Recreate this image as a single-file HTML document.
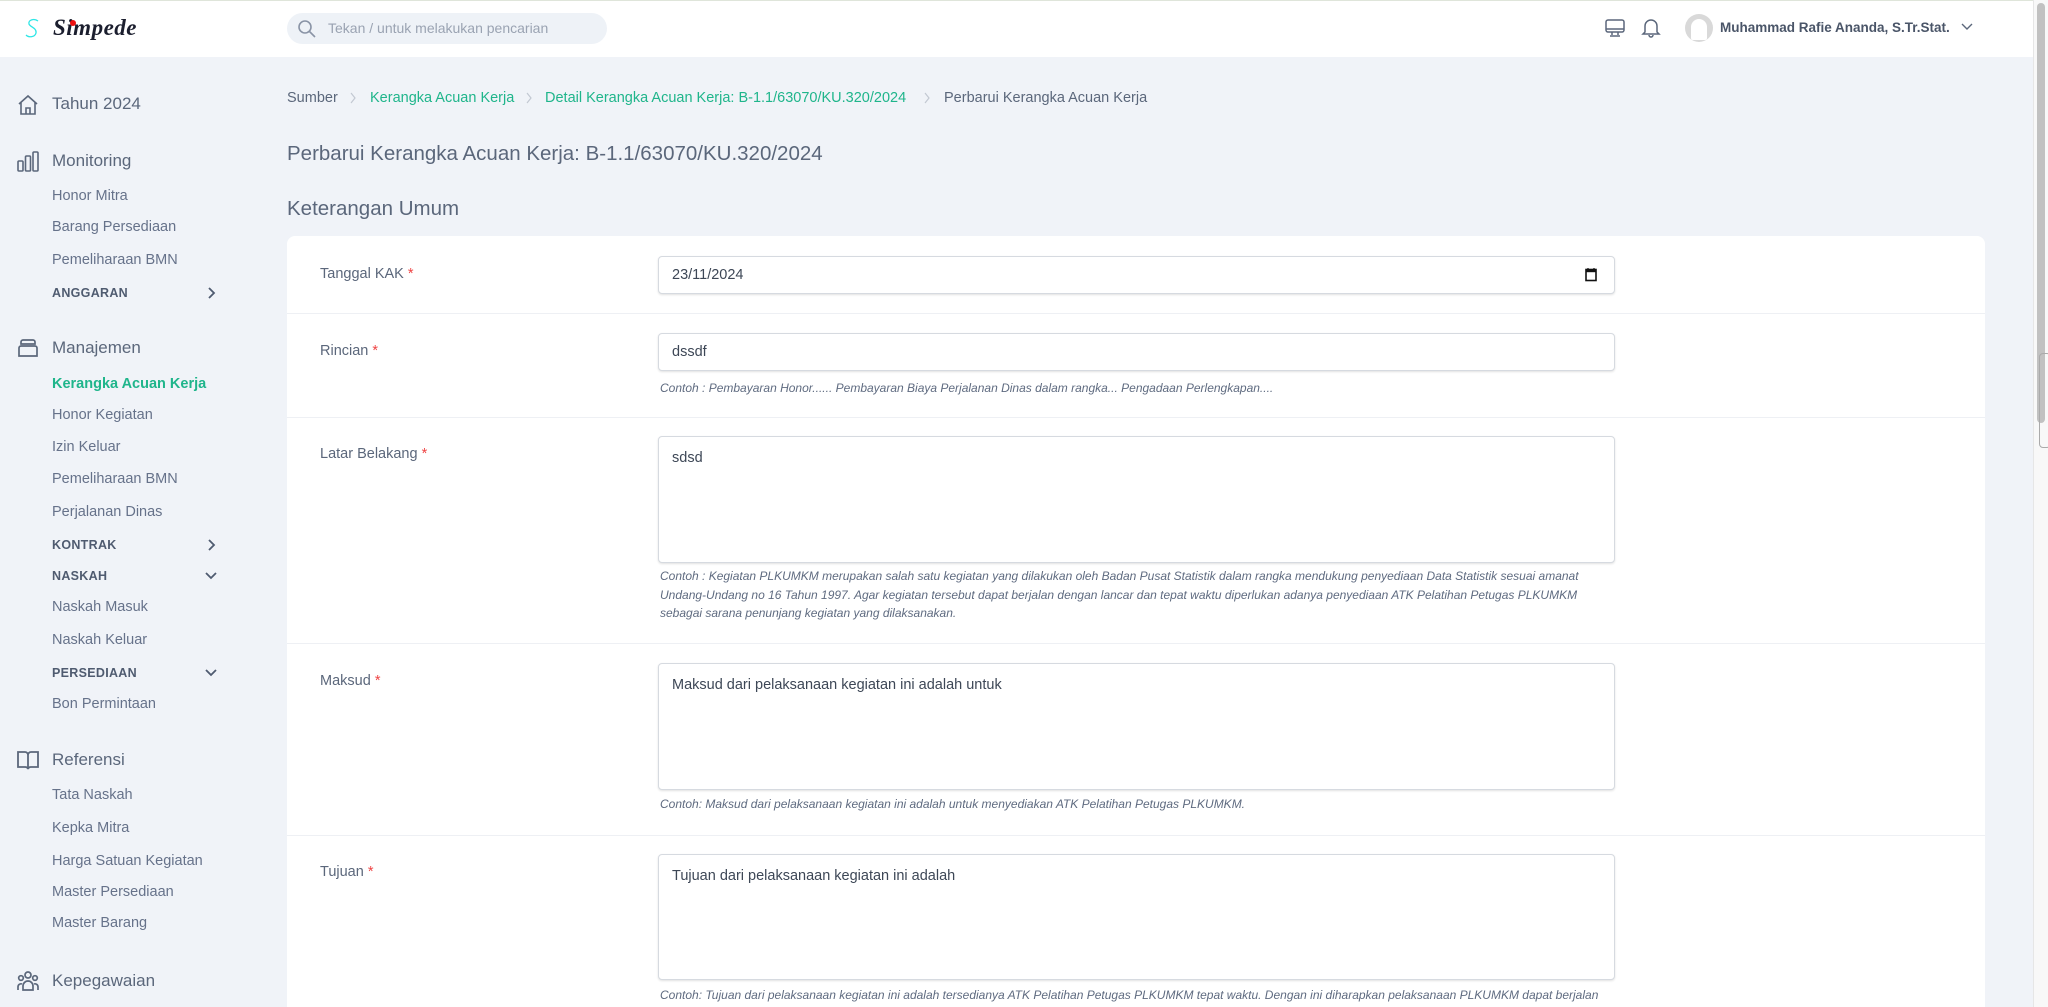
<!DOCTYPE html>
<html style="overflow:hidden;height:1007px"><head><meta charset="utf-8">
<style>
*{margin:0;padding:0;box-sizing:border-box}
body{width:2048px;height:1007px;overflow:hidden;background:#f0f3f8;font-family:"Liberation Sans",sans-serif;color:#5b677b;position:relative}
.a{position:absolute;white-space:nowrap}
.hdr{position:absolute;left:0;top:0;width:2033px;height:57px;background:#fff;border-top:1px solid #dfe5da}
.sb{position:absolute;left:2033px;top:0;width:15px;height:1007px;background:#f8f8f8;border-left:1px solid #e6e6e6}
.thumb{position:absolute;left:2037px;top:3px;width:8px;height:420px;background:#c1c1c1;border-radius:4px}
.sec{font-size:17px;color:#5b677b}
.sub{font-size:14.5px;color:#66728a}
.cap{font-size:12.5px;font-weight:bold;color:#4f5b70;letter-spacing:.3px}
.card{position:absolute;left:287px;top:236px;width:1698px;height:771px;background:#fff;border-radius:8px 8px 0 0}
.lbl{font-size:14.5px;color:#5b677b}
.lbl b{color:#ef4444;font-weight:normal}
.inp{position:absolute;left:658px;width:957px;border:1px solid #d6dae0;border-radius:4px;background:#fff;box-shadow:0 1px 2px rgba(0,0,0,.12);font-size:14.5px;color:#3d4756;padding:0 13px}
.help{font-size:12px;font-style:italic;color:#5f6b80;line-height:18.6px}
.div{position:absolute;left:287px;width:1698px;height:1px;background:#eef0f4}
svg{position:absolute}
</style></head><body>
<div class="hdr"></div>
<svg style="left:24px;top:18px" width="18" height="22" viewBox="0 0 18 22"><path d="M14 3C10 0 4 2 5 6c1 3 8 4 7 9-1 4-7 5-10 2" fill="none" stroke="#2ee6e6" stroke-width="1.3"/></svg>
<div class="a" style="left:53px;top:15px;font-size:23px;font-weight:bold;font-style:italic;font-family:'Liberation Serif',serif;color:#1b1e2e;letter-spacing:.5px">Simpede</div>
<div class="a" style="left:70px;top:20px;width:6px;height:6px;border-radius:3px;background:#e11"></div>
<div class="a" style="left:287px;top:13px;width:320px;height:31px;border-radius:16px;background:#eef2f7"></div>
<svg style="left:297px;top:19px" width="20" height="20" viewBox="0 0 20 20"><circle cx="8" cy="8" r="6" fill="none" stroke="#8a94a6" stroke-width="1.6"/><path d="M12.5 12.5L18 18" stroke="#8a94a6" stroke-width="1.6"/></svg>
<div class="a" style="left:328px;top:20px;font-size:14px;color:#9aa3b2">Tekan / untuk melakukan pencarian</div>
<svg style="left:1604px;top:17px" width="22" height="22" viewBox="0 0 22 22" fill="none" stroke="#5b677b" stroke-width="1.5"><rect x="2" y="3" width="18" height="12" rx="2"/><path d="M2 12h18M8 15v3M14 15v3M6 19h10"/></svg>
<svg style="left:1641px;top:17px" width="20" height="22" viewBox="0 0 20 22" fill="none" stroke="#5b677b" stroke-width="1.5"><path d="M4 15V9a6 6 0 0112 0v6l2 2H2z M8 18a2 2 0 004 0"/></svg>
<div class="a" style="left:1685px;top:14px;width:28px;height:28px;border-radius:14px;background:#d9d9d9"></div>
<div class="a" style="left:1691px;top:19px;width:16px;height:21px;border-radius:8px 8px 2px 2px;background:#fff"></div>
<div class="a" style="left:1720px;top:20px;font-size:13.5px;font-weight:bold;color:#4a5568">Muhammad Rafie Ananda, S.Tr.Stat.</div>
<svg style="left:1961px;top:21px" width="12" height="10" viewBox="0 0 12 10"><path d="M1 3l5 5 5-5" fill="none" stroke="#5b677b" stroke-width="1.4"/></svg>
<div class="sb"></div><div class="thumb"></div>
<div class="a" style="left:2039px;top:353px;width:12px;height:95px;border:1.5px solid #aaa;border-radius:4px"></div>

<svg style="left:16px;top:93px" width="24" height="24" viewBox="0 0 24 24" fill="none" stroke="#5b677b" stroke-width="1.6"><path d="M3 11L12 3l9 8M5 9v12h14V9M10 21v-6h4v6"/></svg>
<div class="a sec" style="left:52px;top:94px">Tahun 2024</div>
<svg style="left:16px;top:150px" width="24" height="24" viewBox="0 0 24 24" fill="none" stroke="#5b677b" stroke-width="1.6"><rect x="2" y="11" width="5" height="10" rx="1"/><rect x="9.5" y="6" width="5" height="15" rx="1"/><rect x="17" y="2" width="5" height="19" rx="1"/></svg>
<div class="a sec" style="left:52px;top:151px">Monitoring</div>
<div class="a sub" style="left:52px;top:188px">Honor Mitra</div>
<div class="a sub" style="left:52px;top:219px">Barang Persediaan</div>
<div class="a sub" style="left:52px;top:252px">Pemeliharaan BMN</div>
<div class="a cap" style="left:52px;top:286px">ANGGARAN</div>
<svg style="left:206px;top:286px" width="10" height="14" viewBox="0 0 10 14"><path d="M3 2l5 5-5 5" fill="none" stroke="#4f5b70" stroke-width="1.8"/></svg>
<svg style="left:16px;top:336px" width="24" height="24" viewBox="0 0 24 24" fill="none" stroke="#5b677b" stroke-width="1.7"><path d="M7 4h10a2 2 0 012 2v2H5V6a2 2 0 012-2zM3 12a2 2 0 012-2h14a2 2 0 012 2v8H3z"/></svg>
<div class="a sec" style="left:52px;top:338px">Manajemen</div>
<div class="a sub" style="left:52px;top:376px;color:#1fb58b;font-weight:bold">Kerangka Acuan Kerja</div>
<div class="a sub" style="left:52px;top:407px">Honor Kegiatan</div>
<div class="a sub" style="left:52px;top:439px">Izin Keluar</div>
<div class="a sub" style="left:52px;top:471px">Pemeliharaan BMN</div>
<div class="a sub" style="left:52px;top:504px">Perjalanan Dinas</div>
<div class="a cap" style="left:52px;top:538px">KONTRAK</div>
<svg style="left:206px;top:538px" width="10" height="14" viewBox="0 0 10 14"><path d="M3 2l5 5-5 5" fill="none" stroke="#4f5b70" stroke-width="1.8"/></svg>
<div class="a cap" style="left:52px;top:569px">NASKAH</div>
<svg style="left:204px;top:571px" width="14" height="10" viewBox="0 0 14 10"><path d="M2 2l5 5 5-5" fill="none" stroke="#4f5b70" stroke-width="1.8"/></svg>
<div class="a sub" style="left:52px;top:599px">Naskah Masuk</div>
<div class="a sub" style="left:52px;top:632px">Naskah Keluar</div>
<div class="a cap" style="left:52px;top:666px">PERSEDIAAN</div>
<svg style="left:204px;top:668px" width="14" height="10" viewBox="0 0 14 10"><path d="M2 2l5 5 5-5" fill="none" stroke="#4f5b70" stroke-width="1.8"/></svg>
<div class="a sub" style="left:52px;top:696px">Bon Permintaan</div>
<svg style="left:16px;top:749px" width="24" height="22" viewBox="0 0 24 22" fill="none" stroke="#5b677b" stroke-width="1.8"><path d="M2 3h7a3 3 0 013 3v14a3 3 0 00-3-2H2zM22 3h-7a3 3 0 00-3 3v14a3 3 0 013-2h7z"/></svg>
<div class="a sec" style="left:52px;top:750px">Referensi</div>
<div class="a sub" style="left:52px;top:787px">Tata Naskah</div>
<div class="a sub" style="left:52px;top:820px">Kepka Mitra</div>
<div class="a sub" style="left:52px;top:853px">Harga Satuan Kegiatan</div>
<div class="a sub" style="left:52px;top:884px">Master Persediaan</div>
<div class="a sub" style="left:52px;top:915px">Master Barang</div>
<svg style="left:16px;top:970px" width="24" height="22" viewBox="0 0 24 22" fill="none" stroke="#5b677b" stroke-width="1.7"><circle cx="12" cy="5" r="3"/><circle cx="5" cy="8" r="2.3"/><circle cx="19" cy="8" r="2.3"/><path d="M7 20v-4a5 5 0 0110 0v4zM2 20v-3a3 3 0 014-3M22 20v-3a3 3 0 00-4-3"/></svg>
<div class="a sec" style="left:52px;top:971px">Kepegawaian</div>

<div class="a" style="left:287px;top:90px;font-size:14.5px;color:#5b677b">Sumber</div>
<svg style="left:349px;top:91px" width="8" height="14" viewBox="0 0 8 14"><path d="M2 2l4 5-4 5" fill="none" stroke="#c2c8d2" stroke-width="1.2"/></svg>
<div class="a" style="left:370px;top:90px;font-size:14.5px;color:#1fb58b">Kerangka Acuan Kerja</div>
<svg style="left:525px;top:91px" width="8" height="14" viewBox="0 0 8 14"><path d="M2 2l4 5-4 5" fill="none" stroke="#c2c8d2" stroke-width="1.2"/></svg>
<div class="a" style="left:545px;top:90px;font-size:14.5px;color:#1fb58b">Detail Kerangka Acuan Kerja: B-1.1/63070/KU.320/2024</div>
<svg style="left:923px;top:91px" width="8" height="14" viewBox="0 0 8 14"><path d="M2 2l4 5-4 5" fill="none" stroke="#c2c8d2" stroke-width="1.2"/></svg>
<div class="a" style="left:944px;top:90px;font-size:14.5px;color:#5b677b">Perbarui Kerangka Acuan Kerja</div>

<div class="a" style="left:287px;top:142px;font-size:20.5px;color:#5b677b">Perbarui Kerangka Acuan Kerja: B-1.1/63070/KU.320/2024</div>
<div class="a" style="left:287px;top:197px;font-size:20.5px;color:#5b677b">Keterangan Umum</div>

<div class="card"></div>
<div class="a lbl" style="left:320px;top:266px">Tanggal KAK <b>*</b></div>
<div class="inp" style="top:256px;height:38px;line-height:36px">23/11/2024</div>
<svg style="left:1585px;top:267px" width="12" height="15" viewBox="0 0 12 15"><rect x="1" y="2.5" width="10" height="11" fill="none" stroke="#111" stroke-width="1.6"/><path d="M1 4h10" stroke="#111" stroke-width="2.4"/><path d="M3 1v2M9 1v2" stroke="#111" stroke-width="1.2"/></svg>
<div class="div" style="top:313px"></div>

<div class="a lbl" style="left:320px;top:343px">Rincian <b>*</b></div>
<div class="inp" style="top:333px;height:38px;line-height:36px">dssdf</div>
<div class="a help" style="left:660px;top:379px">Contoh : Pembayaran Honor...... Pembayaran Biaya Perjalanan Dinas dalam rangka... Pengadaan Perlengkapan....</div>
<div class="div" style="top:417px"></div>

<div class="a lbl" style="left:320px;top:446px">Latar Belakang <b>*</b></div>
<div class="inp" style="top:436px;height:127px;padding-top:13px">sdsd</div>
<div class="a help" style="left:660px;top:567px">Contoh : Kegiatan PLKUMKM merupakan salah satu kegiatan yang dilakukan oleh Badan Pusat Statistik dalam rangka mendukung penyediaan Data Statistik sesuai amanat<br>Undang-Undang no 16 Tahun 1997. Agar kegiatan tersebut dapat berjalan dengan lancar dan tepat waktu diperlukan adanya penyediaan ATK Pelatihan Petugas PLKUMKM<br>sebagai sarana penunjang kegiatan yang dilaksanakan.</div>
<div class="div" style="top:643px"></div>

<div class="a lbl" style="left:320px;top:673px">Maksud <b>*</b></div>
<div class="inp" style="top:663px;height:127px;padding-top:13px">Maksud dari pelaksanaan kegiatan ini adalah untuk</div>
<div class="a help" style="left:660px;top:795px">Contoh: Maksud dari pelaksanaan kegiatan ini adalah untuk menyediakan ATK Pelatihan Petugas PLKUMKM.</div>
<div class="div" style="top:835px"></div>

<div class="a lbl" style="left:320px;top:864px">Tujuan <b>*</b></div>
<div class="inp" style="top:854px;height:126px;padding-top:13px">Tujuan dari pelaksanaan kegiatan ini adalah</div>
<div class="a help" style="left:660px;top:986px">Contoh: Tujuan dari pelaksanaan kegiatan ini adalah tersedianya ATK Pelatihan Petugas PLKUMKM tepat waktu. Dengan ini diharapkan pelaksanaan PLKUMKM dapat berjalan</div>
</body></html>
